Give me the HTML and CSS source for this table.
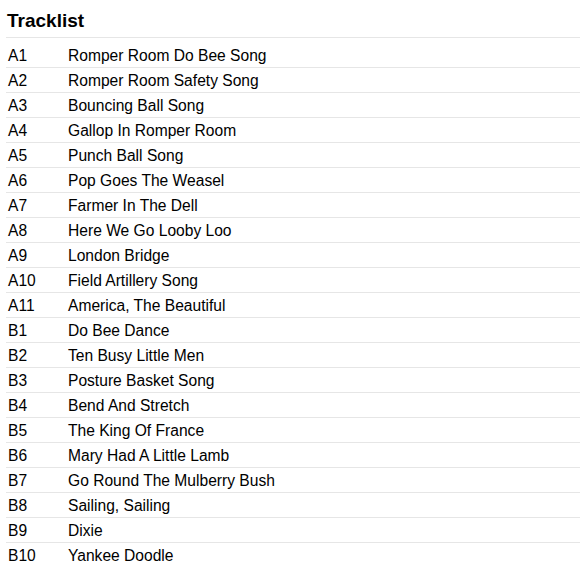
FILE: index.html
```html
<!DOCTYPE html>
<html>
<head>
<meta charset="utf-8">
<link rel="stylesheet" href="styles.css">
</head>
<body>
<section class="tracklist">
  <h2 class="title">Tracklist</h2>
  <ol class="tracks">
    <li class="track"><span class="pos">A1</span><span class="name">Romper Room Do Bee Song</span></li>
    <li class="track"><span class="pos">A2</span><span class="name">Romper Room Safety Song</span></li>
    <li class="track"><span class="pos">A3</span><span class="name">Bouncing Ball Song</span></li>
    <li class="track"><span class="pos">A4</span><span class="name">Gallop In Romper Room</span></li>
    <li class="track"><span class="pos">A5</span><span class="name">Punch Ball Song</span></li>
    <li class="track"><span class="pos">A6</span><span class="name">Pop Goes The Weasel</span></li>
    <li class="track"><span class="pos">A7</span><span class="name">Farmer In The Dell</span></li>
    <li class="track"><span class="pos">A8</span><span class="name">Here We Go Looby Loo</span></li>
    <li class="track"><span class="pos">A9</span><span class="name">London Bridge</span></li>
    <li class="track"><span class="pos">A10</span><span class="name">Field Artillery Song</span></li>
    <li class="track"><span class="pos">A11</span><span class="name">America, The Beautiful</span></li>
    <li class="track"><span class="pos">B1</span><span class="name">Do Bee Dance</span></li>
    <li class="track"><span class="pos">B2</span><span class="name">Ten Busy Little Men</span></li>
    <li class="track"><span class="pos">B3</span><span class="name">Posture Basket Song</span></li>
    <li class="track"><span class="pos">B4</span><span class="name">Bend And Stretch</span></li>
    <li class="track"><span class="pos">B5</span><span class="name">The King Of France</span></li>
    <li class="track"><span class="pos">B6</span><span class="name">Mary Had A Little Lamb</span></li>
    <li class="track"><span class="pos">B7</span><span class="name">Go Round The Mulberry Bush</span></li>
    <li class="track"><span class="pos">B8</span><span class="name">Sailing, Sailing</span></li>
    <li class="track"><span class="pos">B9</span><span class="name">Dixie</span></li>
    <li class="track"><span class="pos">B10</span><span class="name">Yankee Doodle</span></li>
  </ol>
</section>
</body>
</html>
```
FILE: styles.css
```css
html, body {
  margin: 0;
  padding: 0;
  background: #fff;
}
body {
  font-family: "Liberation Sans", Arial, sans-serif;
  color: #000;
}
.tracklist {
  padding-left: 6px;
}
.title {
  margin: 0;
  padding: 10px 0 5px 1px;
  font-size: 19px;
  line-height: 22px;
  font-weight: bold;
  border-bottom: 1px solid #e6e6e6;
}
.tracks {
  list-style: none;
  margin: 5px 0 0 0;
  padding: 0;
}
.track {
  display: grid;
  grid-template-columns: 60px 1fr;
  padding: 2px 0 0 2px;
  font-size: 15.6px;
  line-height: 22px;
  border-bottom: 1px solid #e6e6e6;
}
.track:last-child {
  border-bottom: none;
}
```
